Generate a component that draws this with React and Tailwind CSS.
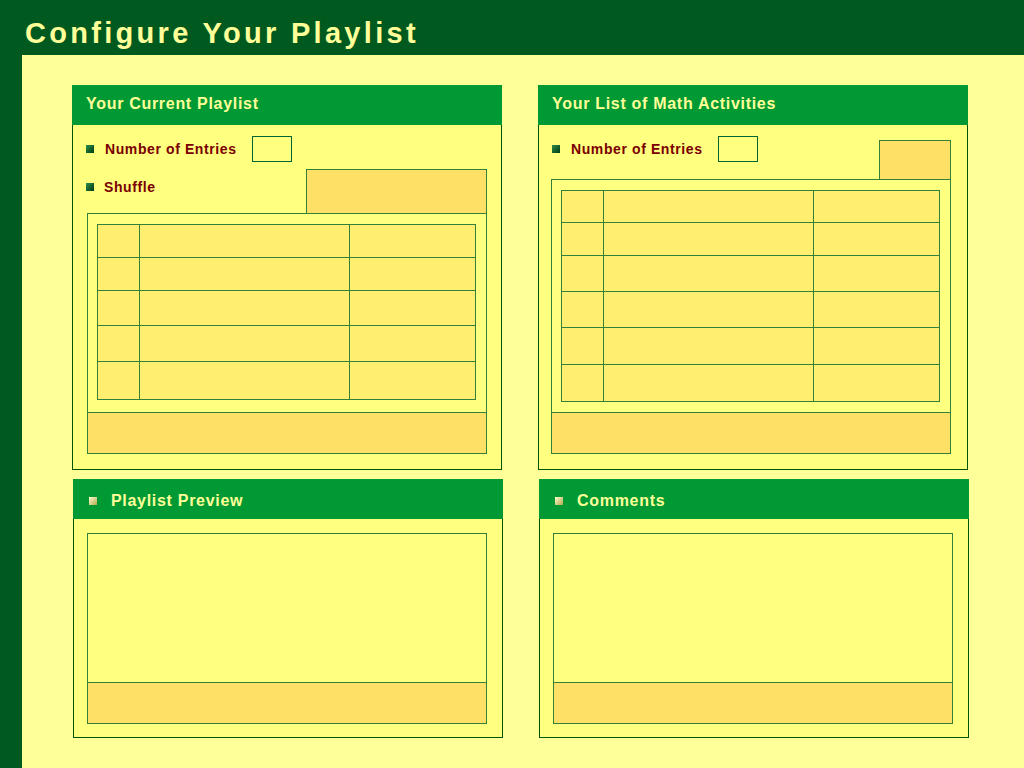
import React from "react";

const FONT = { fontFamily: '"Liberation Sans", Arial, Helvetica, sans-serif' };

const LEFT_ROWS = ["h-[33px]", "h-[33px]", "h-[35px]", "h-[36px]", "h-[38px]"];
const RIGHT_ROWS = ["h-[32px]", "h-[33px]", "h-[36px]", "h-[36px]", "h-[37px]", "h-[37px]"];

function Bullet() {
  return (
    <span className="w-[8px] h-[8px] shrink-0 bg-gradient-to-br from-[#2f8f4a] to-[#003d14]" />
  );
}

function LightBullet() {
  return (
    <span className="w-[8px] h-[8px] shrink-0 bg-gradient-to-br from-[#ffffd0] to-[#b5a84a]" />
  );
}

function Label({ children }) {
  return (
    <span className="text-[14px] leading-[16px] font-bold tracking-[0.6px] text-[#7a0000]">
      {children}
    </span>
  );
}

function EntriesRow({ className }) {
  return (
    <div className={`flex items-center h-[26px] ${className}`}>
      <Bullet />
      <div className="w-[158px] pl-[11px]">
        <Label>Number of Entries</Label>
      </div>
      <div className="w-[40px] h-[26px] border border-[#006633]" />
    </div>
  );
}

function Grid({ rows }) {
  return (
    <div className="w-[379px] border-r border-b border-[#33803a]">
      {rows.map((h, i) => (
        <div key={i} className={`flex ${h}`}>
          <div className="w-[42px] border-t border-l border-[#33803a] bg-[#ffee70]" />
          <div className="w-[210px] border-t border-l border-[#33803a] bg-[#ffee70]" />
          <div className="flex-1 border-t border-l border-[#33803a] bg-[#ffee70]" />
        </div>
      ))}
    </div>
  );
}

function Frame({ rows, height }) {
  return (
    <div className={`w-[400px] ${height} border border-[#33803a] flex flex-col`}>
      <div className="pt-[10px] pl-[9px]">
        <Grid rows={rows} />
      </div>
      <div className="mt-auto h-[41px] border-t border-[#33803a] bg-[#ffe066]" />
    </div>
  );
}

function PanelHeader({ children }) {
  return (
    <div className="h-[40px] shrink-0 bg-[#009933] pl-[14px] pt-[7px]">
      <span className="text-[16px] leading-[18px] font-bold tracking-[0.7px] text-[#ffff99]">
        {children}
      </span>
    </div>
  );
}

function BottomPanel({ title }) {
  return (
    <div className="ml-px w-[430px] h-[259px] flex flex-col">
      <div className="h-[40px] shrink-0 bg-[#009933] pl-[16px] pt-[13px]">
        <div className="flex items-center gap-[14px] leading-[18px]">
          <LightBullet />
          <span className="text-[16px] font-bold tracking-[0.7px] text-[#ffff99]">
            {title}
          </span>
        </div>
      </div>
      <div className="flex-1 bg-[#ffff80] border-x border-b border-[#005500] pl-[13px] pt-[14px]">
        <div className="w-[400px] h-[191px] border border-[#33803a] flex flex-col">
          <div className="mt-auto h-[41px] border-t border-[#33803a] bg-[#ffe066]" />
        </div>
      </div>
    </div>
  );
}

export default function App() {
  return (
    <div className="w-[1024px] h-[768px] flex flex-col bg-[#005a1f]" style={FONT}>
      {/* title bar */}
      <div className="h-[55px] shrink-0 pl-[25px] pt-[17px]">
        <h1 className="text-[29px] leading-[33px] font-bold tracking-[3.3px] text-[#ffff99]">
          Configure Your Playlist
        </h1>
      </div>

      <div className="flex-1 flex">
        <div className="w-[22px] shrink-0" />
        <div className="flex-1 bg-[#ffff99] pl-[50px] pt-[30px]">
          <div className="grid grid-cols-[430px_430px] grid-rows-[385px_259px] gap-x-[36px] gap-y-[9px]">
            {/* current playlist */}
            <div className="flex flex-col">
              <PanelHeader>Your Current Playlist</PanelHeader>
              <div className="flex-1 bg-[#ffff80] border-x border-b border-[#005500] px-[14px]">
                <EntriesRow className="mt-[11px] -ml-px" />
                <div className="flex justify-between mt-[7px] h-[44px]">
                  <div className="flex items-center h-[14px] mt-[11px] -ml-px">
                    <Bullet />
                    <span className="pl-[10px]">
                      <Label>Shuffle</Label>
                    </span>
                  </div>
                  <div className="w-[181px] h-[44px] border-t border-x border-[#33803a] bg-[#ffe066]" />
                </div>
                <Frame rows={LEFT_ROWS} height="h-[241px]" />
              </div>
            </div>

            {/* math activities */}
            <div className="flex flex-col">
              <PanelHeader>Your List of Math Activities</PanelHeader>
              <div className="flex-1 bg-[#ffff80] border-x border-b border-[#005500] pl-[12px]">
                <div className="w-[400px] h-[54px] flex justify-between">
                  <EntriesRow className="mt-[11px] ml-px" />
                  <div className="self-end w-[72px] h-[39px] border-t border-x border-[#33803a] bg-[#ffe066]" />
                </div>
                <Frame rows={RIGHT_ROWS} height="h-[275px]" />
              </div>
            </div>

            <BottomPanel title="Playlist Preview" />
            <BottomPanel title="Comments" />
          </div>
        </div>
      </div>
    </div>
  );
}
